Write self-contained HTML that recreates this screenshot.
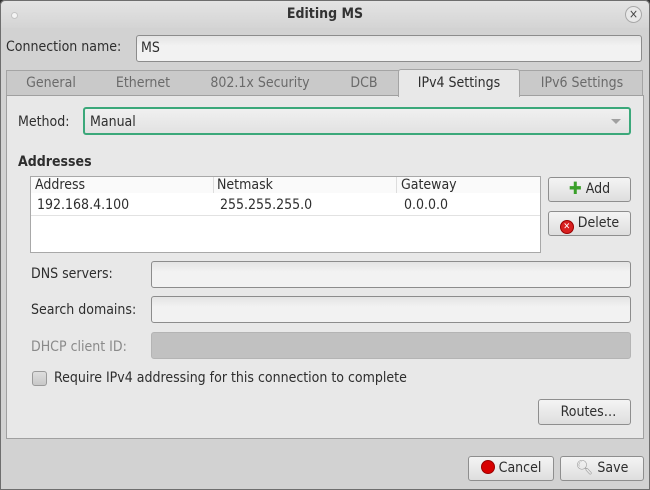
<!DOCTYPE html>
<html><head><style>
*{box-sizing:border-box;margin:0;padding:0}
body{width:650px;height:490px;background:#333;font-family:"DejaVu Sans Condensed","DejaVu Sans","Liberation Sans",sans-serif;font-size:14px;color:#2e2e2e;position:relative;overflow:hidden}
.win{position:absolute;left:0;top:0;width:650px;height:490px;background:#d2d2d2;box-shadow:inset 0 0 0 1px #6e6e6e;border-radius:5px 5px 0 0}
.a{position:absolute;white-space:nowrap}
.title{left:1px;top:1px;width:648px;height:27px;background:linear-gradient(#e4e4e4,#d4d4d4);border-radius:5px 5px 0 0;text-align:center;line-height:26px;font-weight:bold;font-size:14px;color:#333}
.inp{position:absolute;background:linear-gradient(#e4e4e4,#f2f2f2 40%);border:1px solid #8c8c8c;border-radius:3px}
.btn{position:absolute;background:linear-gradient(#f4f4f4,#dedede);border:1px solid #8e8e8e;border-radius:3px;text-align:center;line-height:23px}
.tab{position:absolute;top:70px;height:25px;line-height:26px;color:#6a6a6a;text-align:center}
</style></head><body>
<div class="win">
<div class="a title">Editing MS</div>
<div class="a" style="left:11px;top:12px;width:7px;height:7px;border-radius:50%;background:#f4f4f4;border:1px solid #c4c4c4"></div>
<div class="a" style="left:625px;top:6px;width:17px;height:17px;border-radius:50%;border:1px solid #a8a8a8;background:#e8e8e8;font-size:12px;line-height:14px;text-align:center;color:#444">×</div>
<div class="a" style="left:6px;top:39px">Connection name:</div>
<div class="inp" style="left:136px;top:35px;width:506px;height:27px;padding-left:4px;line-height:25px">MS</div>
<div class="a" style="left:6px;top:70px;width:637px;height:26px;background:#c9c9c9;border:1px solid #a4a4a4;border-bottom:none"></div>
<div class="tab" style="left:14px;width:74px">General</div>
<div class="tab" style="left:104px;width:78px">Ethernet</div>
<div class="tab" style="left:200px;width:120px">802.1x Security</div>
<div class="tab" style="left:338px;width:52px">DCB</div>
<div class="tab" style="left:522px;width:120px">IPv6 Settings</div>
<div class="a" style="left:6px;top:95px;width:638px;height:344px;background:#e8e8e8;border:1px solid #a0a0a0"></div>
<div class="a" style="left:398px;top:69px;width:122px;height:28px;background:#e8e8e8;border:1px solid #a4a4a4;border-bottom:none;border-radius:3px 3px 0 0;text-align:center;line-height:27px;color:#2e2e2e">IPv4 Settings</div>
<div class="a" style="left:18px;top:114px">Method:</div>
<div class="a" style="left:83px;top:107px;width:548px;height:28px;border:2px solid #3ba87a;border-radius:3px;background:linear-gradient(#f0f0f0,#e2e2e2);padding-left:5px;line-height:26px">Manual<span style="position:absolute;right:8px;top:10px;width:0;height:0;border-left:5px solid transparent;border-right:5px solid transparent;border-top:5px solid #a0a0a0"></span></div>
<div class="a" style="left:18px;top:154px;font-weight:bold">Addresses</div>
<div class="a" style="left:30px;top:176px;width:511px;height:77px;background:#fff;border:1px solid #a8a8a8"></div>
<div class="a" style="left:31px;top:177px;width:509px;height:16px;background:#fafafa"></div>
<div class="a" style="left:213px;top:177px;width:1px;height:16px;background:#ddd"></div>
<div class="a" style="left:396px;top:177px;width:1px;height:16px;background:#ddd"></div>
<div class="a" style="left:35px;top:177px">Address</div>
<div class="a" style="left:217px;top:177px">Netmask</div>
<div class="a" style="left:401px;top:177px">Gateway</div>
<div class="a" style="left:37px;top:197px">192.168.4.100</div>
<div class="a" style="left:220px;top:197px">255.255.255.0</div>
<div class="a" style="left:404px;top:197px">0.0.0.0</div>
<div class="a" style="left:31px;top:215px;width:509px;height:1px;background:#e2e2e2"></div>
<div class="btn" style="left:548px;top:177px;width:83px;height:25px"><span style="color:#3aa02a;font-weight:bold;font-size:17px;vertical-align:-1px">✚</span> Add</div>
<div class="btn" style="left:548px;top:211px;width:83px;height:25px"><span style="display:inline-block;width:14px;height:14px;border-radius:50%;background:#d82020;border:1px solid #900;color:#fff;font-size:9px;line-height:12px;vertical-align:-2px;font-weight:bold">✕</span> Delete</div>
<div class="a" style="left:31px;top:266px">DNS servers:</div>
<div class="inp" style="left:151px;top:261px;width:480px;height:27px"></div>
<div class="a" style="left:31px;top:302px">Search domains:</div>
<div class="inp" style="left:151px;top:296px;width:480px;height:27px"></div>
<div class="a" style="left:31px;top:339px;color:#8a8a8a">DHCP client ID:</div>
<div class="a" style="left:151px;top:332px;width:480px;height:27px;background:#c1c1c1;border:1px solid #b4b4b4;border-radius:3px"></div>
<div class="a" style="left:32px;top:371px;width:15px;height:15px;border:1px solid #9a9a9a;border-radius:3px;background:linear-gradient(#dedede,#c8c8c8)"></div>
<div class="a" style="left:54px;top:370px">Require IPv4 addressing for this connection to complete</div>
<div class="btn" style="left:538px;top:399px;width:93px;height:26px;line-height:25px">&nbsp;&nbsp;Routes…</div>
<div class="btn" style="left:468px;top:456px;width:86px;height:25px"><span style="display:inline-block;width:14px;height:14px;border-radius:50%;background:#d80000;border:1px solid #900;vertical-align:-2px"></span> Cancel</div>
<div class="btn" style="left:560px;top:456px;width:84px;height:25px"><span style="color:#999">🔍︎</span> Save</div>
</div>
</body></html>
